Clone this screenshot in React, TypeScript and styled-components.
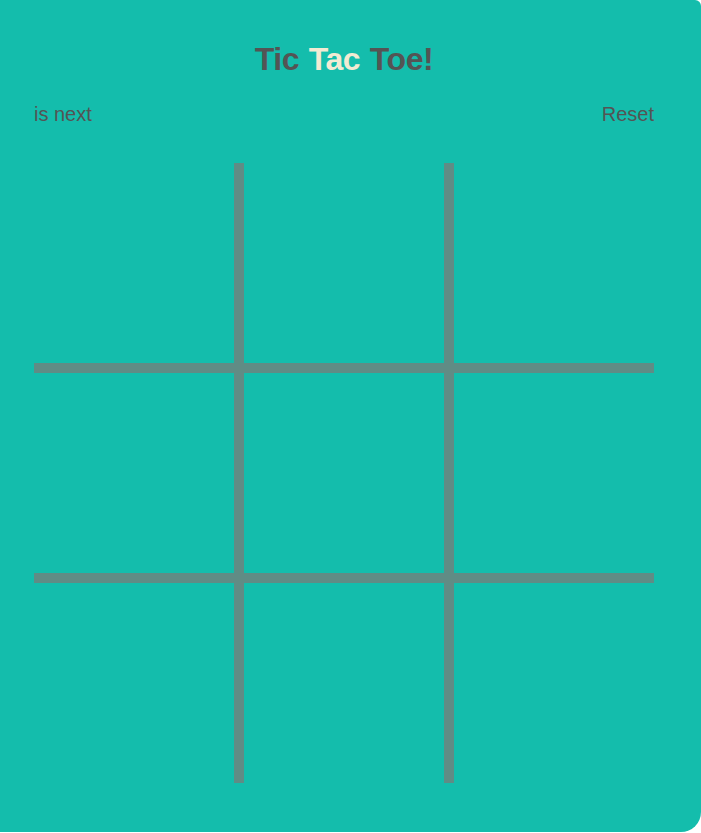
import React, { useState } from "react";
import styled, { createGlobalStyle } from "styled-components";

const GlobalStyle = createGlobalStyle`
  html, body {
    margin: 0;
    padding: 0;
    background: #ffffff;
  }
  body {
    font-family: "Liberation Sans", Arial, sans-serif;
  }
`;

const Board = styled.div`
  box-sizing: border-box;
  width: 701px;
  height: 832px;
  background: #14bdac;
  border-radius: 0 6px 20px 0;
  padding: 41px 47px 0 34px;
  display: flex;
  flex-direction: column;
  align-items: stretch;
`;

const Title = styled.h1`
  margin: 0;
  font-size: 32px;
  line-height: 37px;
  font-weight: 700;
  letter-spacing: -0.4px;
  word-spacing: 1px;
  color: #545454;
  text-align: center;
`;

const Accent = styled.span`
  color: #f2ebd3;
`;

const StatusRow = styled.div`
  margin-top: 25px;
  display: flex;
  justify-content: space-between;
  align-items: center;
  font-size: 20px;
  line-height: 23px;
  color: #545454;
`;

const ResetButton = styled.button`
  border: none;
  background: none;
  padding: 0;
  margin: 0;
  font: inherit;
  color: inherit;
  cursor: pointer;
`;

const Grid = styled.div`
  margin-top: 37px;
  width: 620px;
  height: 620px;
  display: grid;
  grid-template-columns: repeat(3, 200px);
  grid-template-rows: repeat(3, 200px);
  gap: 10px;
  background: #608c85;
`;

const Cell = styled.button<{ $mark: string | null }>`
  border: none;
  padding: 0;
  margin: 0;
  background: #14bdac;
  font-family: "Liberation Sans", Arial, sans-serif;
  font-size: 120px;
  font-weight: 700;
  color: ${(p) => (p.$mark === "X" ? "#545454" : "#f2ebd3")};
  cursor: pointer;
`;

export default function App() {
  const [cells, setCells] = useState<(string | null)[]>(Array(9).fill(null));
  const [xNext, setXNext] = useState(true);
  const started = cells.some((c) => c !== null);

  const play = (i: number) => {
    if (cells[i]) return;
    const next = cells.slice();
    next[i] = xNext ? "X" : "O";
    setCells(next);
    setXNext(!xNext);
  };

  return (
    <>
      <GlobalStyle />
      <Board>
        <Title>
          Tic <Accent>Tac</Accent> Toe!
        </Title>
        <StatusRow>
          <span>{started ? (xNext ? "X" : "O") + " is next" : "is next"}</span>
          <ResetButton
            onClick={() => {
              setCells(Array(9).fill(null));
              setXNext(true);
            }}
          >
            Reset
          </ResetButton>
        </StatusRow>
        <Grid>
          {cells.map((c, i) => (
            <Cell key={i} $mark={c} onClick={() => play(i)}>
              {c}
            </Cell>
          ))}
        </Grid>
      </Board>
    </>
  );
}
